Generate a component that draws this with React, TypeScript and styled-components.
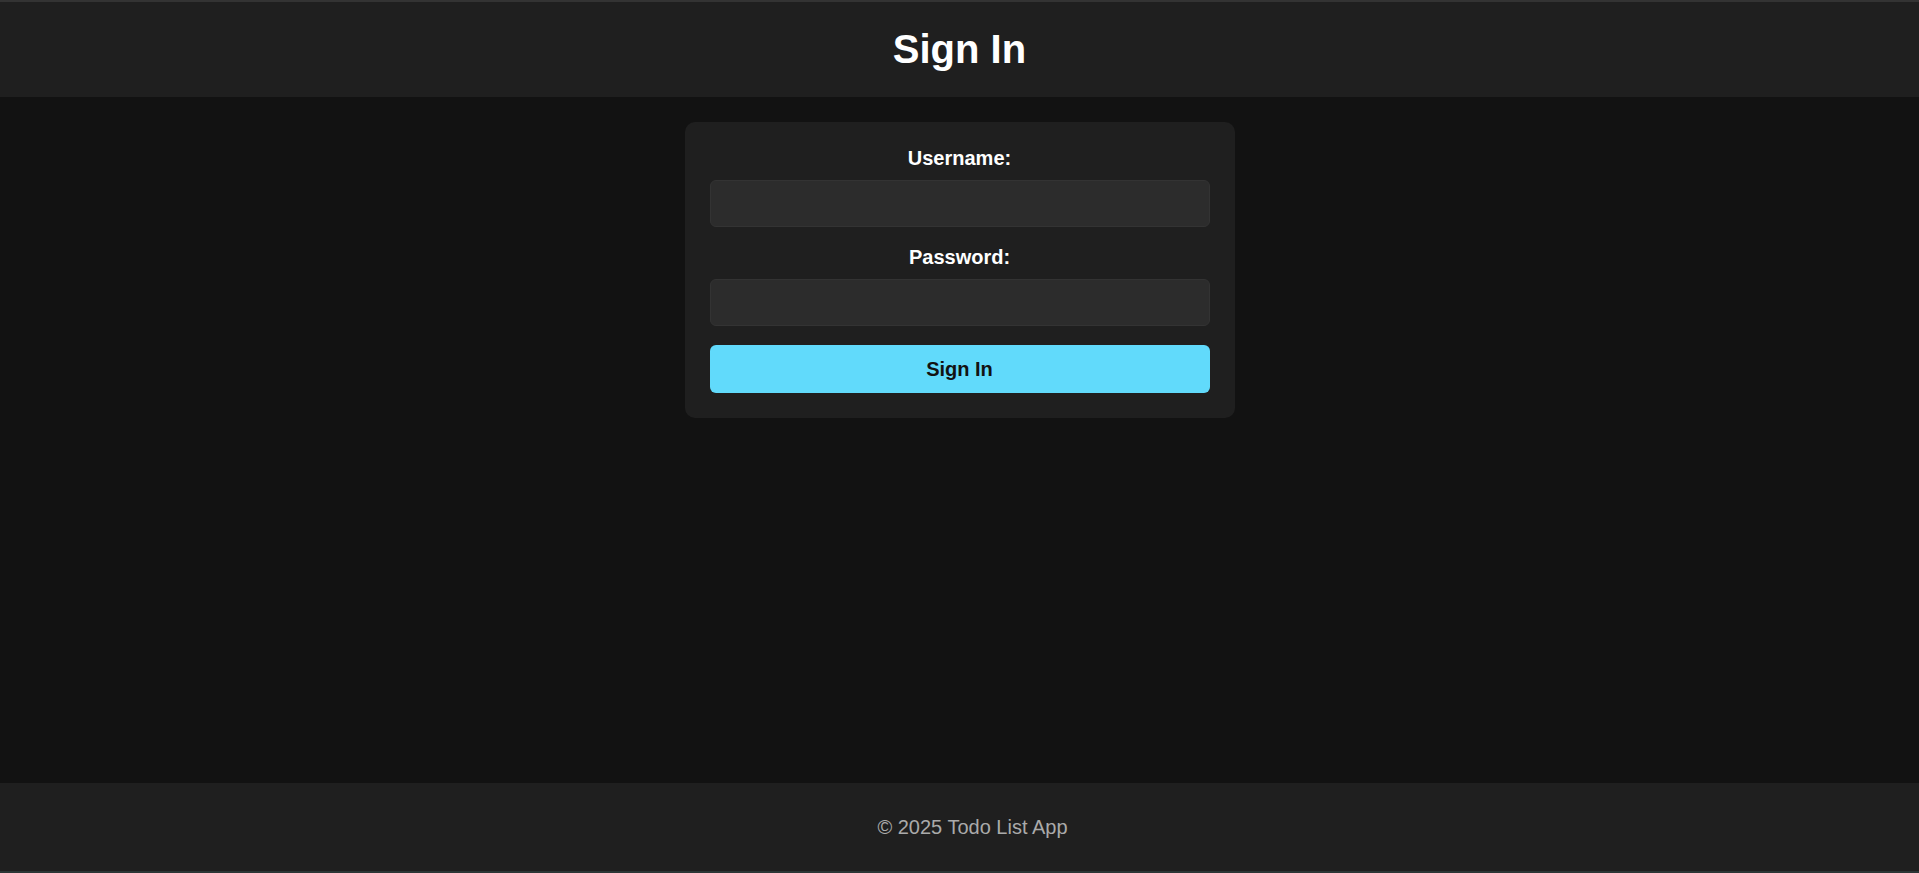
import React from "react";
import styled, { createGlobalStyle } from "styled-components";

const GlobalStyle = createGlobalStyle`
  * { box-sizing: border-box; }
  html, body { margin: 0; padding: 0; }
  body {
    background: #121212;
    color: #ffffff;
    font-family: "Liberation Sans", Arial, sans-serif;
  }
`;

const Page = styled.div`
  min-height: 100vh;
  display: flex;
  flex-direction: column;
  background: #121212;
`;

const Header = styled.header`
  background: #1f1f1f;
  border-top: 2px solid #333333;
  padding: 24px 0 25px;
  text-align: center;
`;

const Title = styled.h1`
  margin: 0;
  font-size: 40px;
  line-height: 46px;
  font-weight: 700;
  color: #ffffff;
`;

const Main = styled.main`
  flex: 1;
  display: flex;
  justify-content: center;
  align-items: flex-start;
  padding-top: 25px;
`;

const Card = styled.form`
  width: 550px;
  background: #1f1f1f;
  border-radius: 10px;
  padding: 25px;
  display: flex;
  flex-direction: column;
`;

const Field = styled.div`
  display: flex;
  flex-direction: column;
  margin-bottom: 19px;
`;

const Label = styled.label`
  text-align: center;
  font-size: 20px;
  line-height: 23px;
  font-weight: 700;
  color: #ffffff;
  margin-bottom: 10px;
`;

const Input = styled.input`
  height: 47px;
  width: 100%;
  background: #2c2c2c;
  border: 1px solid #333333;
  border-radius: 6px;
  color: #ffffff;
  font-size: 17px;
  font-family: "Liberation Sans", Arial, sans-serif;
  padding: 0 12px;
  outline: none;
`;

const Button = styled.button`
  height: 48px;
  width: 100%;
  border: none;
  border-radius: 6px;
  background: #61dafb;
  color: #121212;
  font-family: "Liberation Sans", Arial, sans-serif;
  font-size: 20px;
  font-weight: 700;
  cursor: pointer;
`;

const Footer = styled.footer`
  background: #1f1f1f;
  border-bottom: 2px solid #2b3636;
  padding: 33px 0 32px 26px;
  text-align: center;
  font-size: 20px;
  line-height: 23px;
  color: #aaaaaa;
`;

export default function App() {
  return (
    <>
      <GlobalStyle />
      <Page>
        <Header>
          <Title>Sign In</Title>
        </Header>
        <Main>
          <Card onSubmit={(e) => e.preventDefault()}>
            <Field>
              <Label htmlFor="username">Username:</Label>
              <Input id="username" type="text" />
            </Field>
            <Field>
              <Label htmlFor="password">Password:</Label>
              <Input id="password" type="password" />
            </Field>
            <Button type="submit">Sign In</Button>
          </Card>
        </Main>
        <Footer>© 2025 Todo List App</Footer>
      </Page>
    </>
  );
}
